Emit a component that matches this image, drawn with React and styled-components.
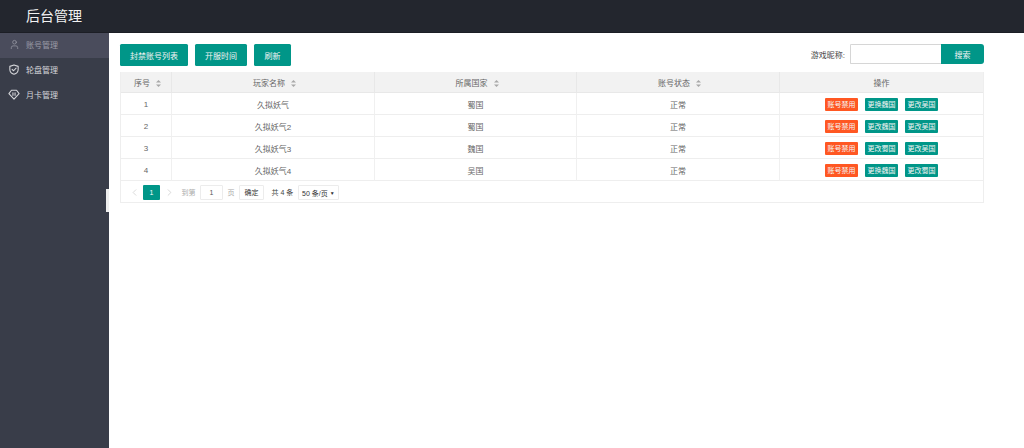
import React from 'react'
import styled, { createGlobalStyle } from 'styled-components'
import { ChevronLeft, ChevronRight, User } from 'lucide-react'

const players = [
  { id: 1, name: '久拟妖气', country: '蜀国', actions: ['更换魏国', '更改吴国'] },
  { id: 2, name: '久拟妖气2', country: '蜀国', actions: ['更改魏国', '更改吴国'] },
  { id: 3, name: '久拟妖气3', country: '魏国', actions: ['更改蜀国', '更改吴国'] },
  { id: 4, name: '久拟妖气4', country: '吴国', actions: ['更换魏国', '更改蜀国'] },
]

const columns = [
  { label: '序号', width: 51, sort: true },
  { label: '玩家名称', width: 203, sort: true },
  { label: '所属国家', width: 202, sort: true },
  { label: '账号状态', width: 203, sort: true },
  { label: '操作', width: 203 },
]

const ShieldIcon = () => (
  <svg width="10" height="11" viewBox="0 0 24 26" fill="none" stroke="currentColor" strokeWidth="2.6" strokeLinejoin="round" strokeLinecap="round">
    <path d="M12 2 L22 5.5 V13 C22 19 17 23 12 24.5 C7 23 2 19 2 13 V5.5 Z" />
    <path d="M7.5 12.5 L11 16 L17 9.5" />
  </svg>
)

const DiamondIcon = () => (
  <svg width="12" height="11" viewBox="0 0 28 26" fill="none" stroke="currentColor" strokeWidth="2.6" strokeLinejoin="round" strokeLinecap="round">
    <path d="M8 3 H20 L26 11 L14 24 L2 11 Z" />
    <path d="M11.5 9 V15 M16.5 9 V15" />
  </svg>
)

const SortIcon = () => (
  <SortBox>
    <svg width="5" height="7" viewBox="0 0 5 7" fill="#a8a8a8">
      <path d="M2.5 0 L5 2.6 H0 Z" />
      <path d="M2.5 7 L5 4.4 H0 Z" />
    </svg>
  </SortBox>
)

const App = () => {
  return (
    <>
      <GlobalStyle />
      <Page>
        <Header>
          <Title>后台管理</Title>
        </Header>
        <Body>
          <Sidebar>
            <MenuItem $active>
              <MenuIcon><User size={11} strokeWidth={1.6} /></MenuIcon>
              账号管理
            </MenuItem>
            <MenuItem>
              <MenuIcon><ShieldIcon /></MenuIcon>
              轮盘管理
            </MenuItem>
            <MenuItem>
              <MenuIcon><DiamondIcon /></MenuIcon>
              月卡管理
            </MenuItem>
            <CollapseHandle />
          </Sidebar>
          <Content>
            <Toolbar>
              <ButtonGroup>
                <Button $width={68}>封禁账号列表</Button>
                <Button $width={52}>开服时间</Button>
                <Button $width={37}>刷新</Button>
              </ButtonGroup>
              <SearchForm>
                <SearchLabel>游戏昵称:</SearchLabel>
                <SearchInput />
                <SearchButton>搜索</SearchButton>
              </SearchForm>
            </Toolbar>
            <TableBox>
              <Table>
                <colgroup>
                  {columns.map((col) => (
                    <col key={col.label} width={col.width} />
                  ))}
                </colgroup>
                <thead>
                  <tr>
                    {columns.map((col) => (
                      <Th key={col.label} $sort={col.sort}>
                        {col.label}
                        {col.sort && <SortIcon />}
                      </Th>
                    ))}
                  </tr>
                </thead>
                <tbody>
                  {players.map((p) => (
                    <tr key={p.id}>
                      <Td>{p.id}</Td>
                      <Td>{p.name}</Td>
                      <Td>{p.country}</Td>
                      <Td>正常</Td>
                      <Td>
                        <Actions>
                          <Tag $danger>账号禁用</Tag>
                          {p.actions.map((a) => (
                            <Tag key={a}>{a}</Tag>
                          ))}
                        </Actions>
                      </Td>
                    </tr>
                  ))}
                </tbody>
              </Table>
              <Pager>
                <PagerArrow><ChevronLeft size={11} strokeWidth={1.4} /></PagerArrow>
                <PageCurrent>1</PageCurrent>
                <PagerArrow><ChevronRight size={11} strokeWidth={1.4} /></PagerArrow>
                <PagerMuted>到第</PagerMuted>
                <PageInput>1</PageInput>
                <PagerMuted>页</PagerMuted>
                <PageConfirm>确定</PageConfirm>
                <PagerText>共 4 条</PagerText>
                <PageSize>50 条/页 <SizeCaret>▼</SizeCaret></PageSize>
              </Pager>
            </TableBox>
          </Content>
        </Body>
      </Page>
    </>
  )
}

const GlobalStyle = createGlobalStyle`
  html, body {
    margin: 0;
    height: 100%;
    overflow: hidden;
  }
  body {
    font-family: "Liberation Sans", "Noto Sans CJK SC", sans-serif;
    color: #666;
    background: #fff;
  }
`

const Page = styled.div`
  display: flex;
  flex-direction: column;
  height: 448px;
`

const Header = styled.header`
  flex: none;
  height: 33px;
  box-sizing: border-box;
  background: #23262e;
  border-bottom: 1px solid #1c1e25;
  display: flex;
  align-items: center;
  padding-left: 26px;
`

const Title = styled.div`
  color: #f2f2f2;
  font-size: 14px;
  line-height: 33px;
`

const Body = styled.div`
  flex: 1;
  display: flex;
  min-height: 0;
`

const Sidebar = styled.aside`
  position: relative;
  flex: none;
  width: 109px;
  background: #393d49;
`

const MenuItem = styled.div`
  display: flex;
  align-items: center;
  height: 25px;
  box-sizing: border-box;
  padding: 0 0 2px 7px;
  font-size: 8px;
  color: ${(p) => (p.$active ? '#9a9ba6' : '#d4d5d9')};
  background: ${(p) => (p.$active ? '#4a4c5c' : 'transparent')};
`

const MenuIcon = styled.span`
  display: flex;
  justify-content: center;
  align-items: center;
  width: 14px;
  margin-right: 5px;
`

const CollapseHandle = styled.div`
  position: absolute;
  right: 0;
  top: 156px;
  width: 3px;
  height: 23px;
  background: #eeeeee;
`

const Content = styled.main`
  flex: 1;
  padding: 11px 40px 0 11px;
  min-width: 0;
`

const Toolbar = styled.div`
  display: flex;
  justify-content: space-between;
  align-items: flex-start;
  height: 28px;
`

const ButtonGroup = styled.div`
  display: flex;
  gap: 7px;
`

const Button = styled.button`
  width: ${(p) => p.$width}px;
  height: 22px;
  padding: 0;
  border: none;
  border-radius: 1.5px;
  background: #009688;
  color: #f4f4f4;
  font: inherit;
  font-size: 8px;
`

const SearchForm = styled.div`
  display: flex;
  align-items: center;
  height: 20px;
`

const SearchLabel = styled.span`
  font-size: 8px;
  color: #444;
  margin-right: 5px;
`

const SearchInput = styled.div`
  width: 91px;
  height: 20px;
  box-sizing: border-box;
  border: 1px solid #d6d6d6;
  border-right: none;
  border-radius: 1.5px 0 0 1.5px;
  background: #fff;
`

const SearchButton = styled.button`
  width: 43px;
  height: 20px;
  padding: 0;
  border: none;
  border-radius: 0 3px 3px 0;
  background: #009688;
  color: #f4f4f4;
  font: inherit;
  font-size: 8px;
`

const TableBox = styled.div`
  width: 864px;
  box-sizing: border-box;
  border: 1px solid #eeeeee;
  border-top: none;
`

const Table = styled.table`
  width: 100%;
  table-layout: fixed;
  border-collapse: separate;
  border-spacing: 0;
  font-size: 8px;
`

const Th = styled.th`
  height: 21px;
  box-sizing: border-box;
  padding: 0 0 0 ${(p) => (p.$sort ? '3px' : '0')};
  background: #f2f2f2;
  border-right: 1px solid #e8e8e8;
  border-bottom: 1px solid #e8e8e8;
  font-weight: 400;
  color: #666;
  text-align: center;
  &:last-child {
    border-right: none;
  }
`

const SortBox = styled.span`
  display: inline-block;
  margin-left: 6px;
  vertical-align: -1px;
  line-height: 0;
`

const Td = styled.td`
  height: 22px;
  box-sizing: border-box;
  padding: 1px 0 0;
  border-right: 1px solid #f0f0f0;
  border-bottom: 1px solid #eeeeee;
  color: #666;
  text-align: center;
  &:last-child {
    border-right: none;
  }
`

const Actions = styled.div`
  display: flex;
  justify-content: center;
  gap: 7px;
`

const Tag = styled.span`
  width: 33px;
  height: 13px;
  line-height: 13px;
  border-radius: 1px;
  font-size: 7px;
  color: #f4f4f4;
  background: ${(p) => (p.$danger ? '#ff5722' : '#009688')};
`

const Pager = styled.div`
  display: flex;
  align-items: center;
  height: 21px;
  box-sizing: border-box;
  padding: 1px 0 0 5px;
  font-size: 7px;
`

const PagerArrow = styled.span`
  display: flex;
  justify-content: center;
  width: 16px;
  color: #c4c4c4;
`

const PageCurrent = styled.span`
  width: 17px;
  height: 15px;
  line-height: 15px;
  margin: 0 1px;
  border-radius: 1px;
  text-align: center;
  background: #009688;
  color: #fff;
`

const PagerMuted = styled.span`
  color: #aaa;
  margin: 0 4.5px;
`

const PageInput = styled.span`
  width: 23px;
  height: 15px;
  line-height: 14px;
  box-sizing: border-box;
  border: 1px solid #ececec;
  border-radius: 1px;
  text-align: center;
  color: #555;
`

const PageConfirm = styled.span`
  width: 25px;
  height: 15px;
  line-height: 14px;
  box-sizing: border-box;
  border: 1px solid #ececec;
  border-radius: 1px;
  text-align: center;
  color: #333;
`

const PagerText = styled.span`
  margin: 0 4.5px 0 7.5px;
  color: #444;
`

const PageSize = styled.span`
  width: 41px;
  height: 15px;
  line-height: 14px;
  box-sizing: border-box;
  border: 1px solid #ececec;
  border-radius: 1px;
  text-align: center;
  color: #333;
  white-space: nowrap;
`

const SizeCaret = styled.span`
  font-size: 5px;
  vertical-align: 1px;
`

export default App
